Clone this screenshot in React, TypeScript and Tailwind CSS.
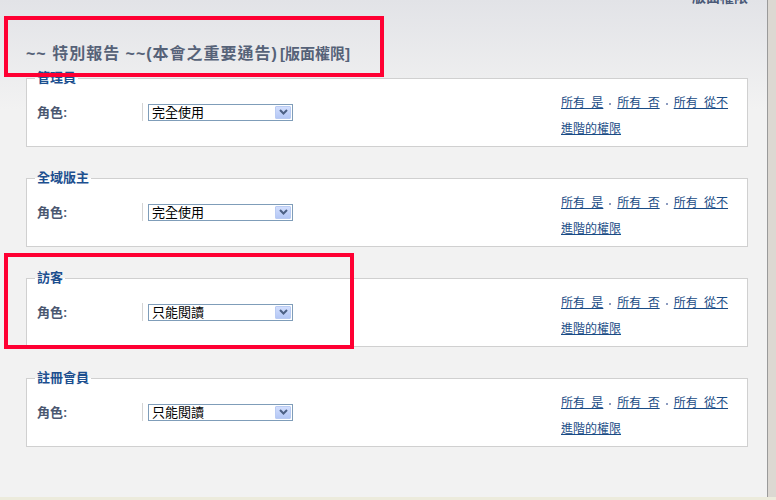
import React from "react";

type Section = { legend: string; value: string };

const sections: Section[] = [
  { legend: "管理員", value: "完全使用" },
  { legend: "全域版主", value: "完全使用" },
  { legend: "訪客", value: "只能閱讀" },
  { legend: "註冊會員", value: "只能閱讀" },
];

function FakeSelect({ value }: { value: string }) {
  return (
    <div className="w-[145px] h-[17px] border border-[#7f9db9] bg-white flex items-center justify-between pl-[3px] pr-px">
      <span className="text-[13px] leading-[15px] text-black">{value}</span>
      <span className="w-[16px] h-[13px] border border-[#b9cbf3] rounded-[1px] bg-[linear-gradient(to_bottom,#d2defd,#b4c7f5)] flex items-center justify-center">
        <svg width="9" height="6" viewBox="0 0 9 6">
          <path d="M1 1 L4.5 4.5 L8 1" fill="none" stroke="#4d6185" strokeWidth="2" />
        </svg>
      </span>
    </div>
  );
}

function Dot() {
  return <span className="inline-block w-[2px] h-[2px] bg-[#8d9cc0] mx-[6px] align-middle" />;
}

function PermFieldset({ s }: { s: Section }) {
  return (
    <fieldset className="border border-[#d0d0d0] bg-white px-[8px] pt-[4px] pb-[4px]">
      <legend className="px-[2px] text-[13px] leading-[16px] font-bold text-[#1c4f8f]">{s.legend}</legend>
      <div className="flex items-start">
        <div className="flex items-center mt-[13px] pl-[2px]">
          <span className="w-[105px] text-[13px] leading-[17px] font-bold text-[#4a5770]">角色:</span>
          <span className="w-px h-[18px] bg-[#d4d4d4]" />
          <span className="ml-[5px]">
            <FakeSelect value={s.value} />
          </span>
        </div>
        <div className="ml-auto w-[178px] text-[12px] leading-[26px] text-[#1a4c86] [word-spacing:3px]">
          <a className="underline" href="#">所有 是</a>
          <Dot />
          <a className="underline" href="#">所有 否</a>
          <Dot />
          <a className="underline" href="#">所有 從不<br />進階的權限</a>
        </div>
      </div>
    </fieldset>
  );
}

export default function App() {
  return (
    <div className="relative w-[776px] h-[500px] overflow-hidden flex flex-col font-['Liberation_Sans','Noto_Sans_CJK_TC',sans-serif]">
      <div className="flex flex-1 min-h-0">
        <main className="flex-1 pl-[26px] pr-[19px] bg-[linear-gradient(to_bottom,#e2e3e7_0px,#f2f2f2_110px)]">
          <div className="flex justify-end items-center mt-[-12px] h-[18px] text-[14px] leading-[18px] font-bold text-[#4b5a78]">
            <span className="text-[#c8a070] mr-[6px] text-[12px]">»</span>
            <span>版面權限</span>
          </div>
          <div className="mt-[37px] h-[22px] flex items-center text-[#566278] font-bold">
            <span className="text-[16px] leading-[22px] tracking-[1px]">~~ 特別報告 ~~(本會之重要通告)</span>
            <span className="ml-[2px] text-[15px] leading-[22px]">[版面權限]</span>
          </div>
          <div className="mt-[5px] flex flex-col gap-[23px]">
            {sections.map((s) => (
              <PermFieldset key={s.legend} s={s} />
            ))}
          </div>
        </main>
        <div className="w-[9px] border-l border-[#9a9a9a] bg-[#dcd8d2]" />
      </div>
      <div className="h-[3px] bg-[#ecebdc]" />

      <div className="absolute left-[4px] top-[16px] w-[380px] h-[61px] border-[4px] border-[#ff0033]" />
      <div className="absolute left-[4px] top-[253px] w-[350px] h-[96px] border-[4px] border-[#ff0033]" />
    </div>
  );
}
